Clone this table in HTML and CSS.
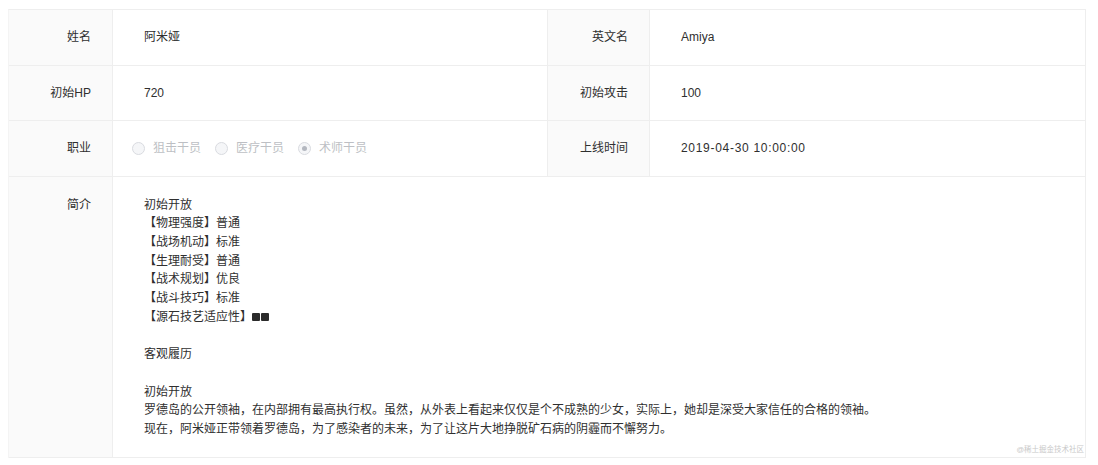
FILE: index.html
```html
<!DOCTYPE html>
<html lang="zh-CN">
<head>
<meta charset="utf-8">
<title>干员信息</title>
<link rel="stylesheet" href="styles.css">
</head>
<body>
<div class="page">
  <div class="desc">
    <div class="label">姓名</div>
    <div class="value">阿米娅</div>
    <div class="label">英文名</div>
    <div class="value">Amiya</div>

    <div class="label">初始HP</div>
    <div class="value">720</div>
    <div class="label">初始攻击</div>
    <div class="value">100</div>

    <div class="label">职业</div>
    <div class="value">
      <div class="radios">
        <span class="radio"><span class="dot"></span><span class="rtext">狙击干员</span></span>
        <span class="radio"><span class="dot"></span><span class="rtext">医疗干员</span></span>
        <span class="radio"><span class="dot checked"></span><span class="rtext">术师干员</span></span>
      </div>
    </div>
    <div class="label">上线时间</div>
    <div class="value num">2019-04-30 10:00:00</div>

    <div class="label top">简介</div>
    <div class="value intro">
      <p>初始开放</p>
      <p>【物理强度】普通</p>
      <p>【战场机动】标准</p>
      <p>【生理耐受】普通</p>
      <p>【战术规划】优良</p>
      <p>【战斗技巧】标准</p>
      <p>【源石技艺适应性】<span class="sq"></span><span class="sq"></span></p>
      <p>&nbsp;</p>
      <p>客观履历</p>
      <p>&nbsp;</p>
      <p>初始开放</p>
      <p>罗德岛的公开领袖，在内部拥有最高执行权。虽然，从外表上看起来仅仅是个不成熟的少女，实际上，她却是深受大家信任的合格的领袖。</p>
      <p>现在，阿米娅正带领着罗德岛，为了感染者的未来，为了让这片大地挣脱矿石病的阴霾而不懈努力。</p>
      <span class="watermark">@稀土掘金技术社区</span>
    </div>
  </div>
</div>
</body>
</html>
```

FILE: styles.css
```css
* { box-sizing: border-box; }
html, body { margin: 0; padding: 0; background: #ffffff; }
body {
  font-family: "Liberation Sans", "Noto Sans CJK SC", sans-serif;
  font-size: 12px;
  color: #333333;
}
.page {
  padding: 9px 12px 8px 8px;
}
.desc {
  display: grid;
  grid-template-columns: 104px 435px 102px 1fr;
  grid-template-rows: 56px 55px 56px auto;
  border-top: 1px solid #eeeeee;
  border-left: 1px solid #f4f4f4;
}
.label, .value {
  border-right: 1px solid #eeeeee;
  border-bottom: 1px solid #eeeeee;
  display: flex;
  align-items: center;
  line-height: 18.7px;
}
.label {
  background: #fafafa;
  justify-content: flex-end;
  padding-right: 21px;
  color: #2f2f2f;
}
.value {
  background: #ffffff;
  padding-left: 31px;
  color: #2f2f2f;
}
.num {
  letter-spacing: 0.7px;
}
.label.top {
  align-items: flex-start;
  padding-top: 18.5px;
}
.intro {
  grid-column: 2 / 5;
  display: block;
  padding-top: 18.5px;
  padding-bottom: 18px;
  position: relative;
}
.intro p { margin: 0; }
.sq {
  display: inline-block;
  width: 8px;
  height: 8px;
  background: #2b2b2b;
  border-radius: 1px;
  margin-right: 1px;
}
.radios {
  display: flex;
  align-items: center;
  gap: 14px;
  margin-left: -12px;
}
.radio {
  display: inline-flex;
  align-items: center;
  gap: 8px;
  color: #bdbfc4;
}
.dot {
  width: 13px;
  height: 13px;
  border-radius: 50%;
  border: 1px solid #d9dbe0;
  background: #f5f6f8;
  display: inline-flex;
  align-items: center;
  justify-content: center;
}
.dot.checked::after {
  content: "";
  width: 5px;
  height: 5px;
  border-radius: 50%;
  background: #b4b8c0;
}
.watermark {
  position: absolute;
  right: 1px;
  bottom: 2px;
  font-size: 7.5px;
  line-height: 10px;
  color: #c9c9c9;
}
```
